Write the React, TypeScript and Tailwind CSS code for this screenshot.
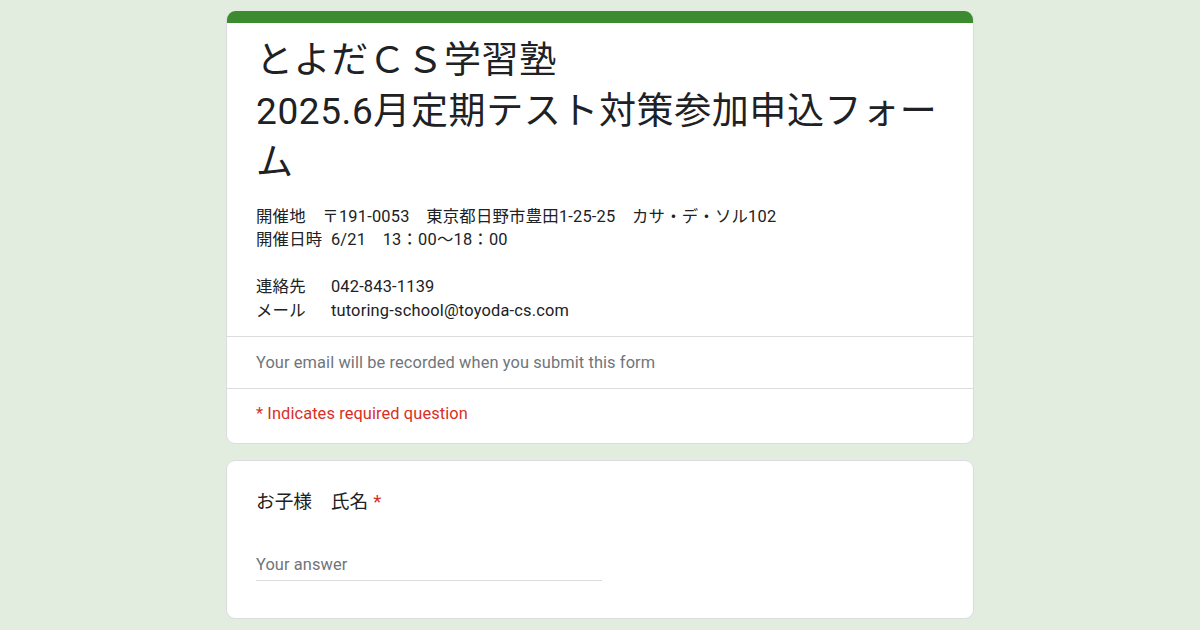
export default function App() {
  const font = { fontFamily: 'Roboto, "Noto Sans CJK JP", sans-serif' };
  return (
    <div
      className="min-h-[630px] w-full bg-[#e2ede0] pt-[11px] flex flex-col items-center gap-[16px] text-[#202124]"
      style={font}
    >
      <div className="w-[748px] rounded-[9px] bg-white border border-t-0 border-[#dadce0] overflow-hidden">
        <div className="h-[12px] bg-[#3d8b31]" />
        <div className="px-[29px] pt-[12px] pb-[14px]">
          <div className="text-[37px] leading-[51px] font-normal tracking-[0.6px]">
            <div>とよだＣＳ学習塾</div>
            <div>2025.6月定期テスト対策参加申込フォー</div>
            <div>ム</div>
          </div>
          <div className="mt-[17px] text-[16.4px] leading-[23.4px] whitespace-pre-wrap tracking-[0.2px]">
            <div>開催地　〒191-0053　東京都日野市豊田1-25-25　カサ・デ・ソル102</div>
            <div>開催日時  6/21　13：00～18：00</div>
            <div>&nbsp;</div>
            <div>連絡先　  042-843-1139</div>
            <div>メール　  tutoring-school@toyoda-cs.com</div>
          </div>
        </div>
        <div className="h-px bg-[#dadce0]" />
        <div className="px-[29px] pt-[14px] pb-[14px] text-[16.4px] leading-[23.4px] text-[#70757a] tracking-[0.1px]">
          Your email will be recorded when you submit this form
        </div>
        <div className="h-px bg-[#dadce0]" />
        <div className="px-[29px] pt-[13px] pb-[17px] text-[16.4px] leading-[23.4px] text-[#d93025] tracking-[0.1px]">
          * Indicates required question
        </div>
      </div>

      <div className="w-[748px] rounded-[9px] bg-white border border-[#dadce0] px-[29px] pt-[27px] pb-[37px]">
        <div className="text-[18.7px] leading-[28px]">
          お子様　氏名<span className="text-[#d93025] pl-[5px]">*</span>
        </div>
        <div className="mt-[37px] w-[346px] border-b border-[#dadce0] pb-[4px] text-[16.4px] leading-[23.4px] text-[#70757a] tracking-[0.1px]">
          Your answer
        </div>
      </div>
    </div>
  );
}
